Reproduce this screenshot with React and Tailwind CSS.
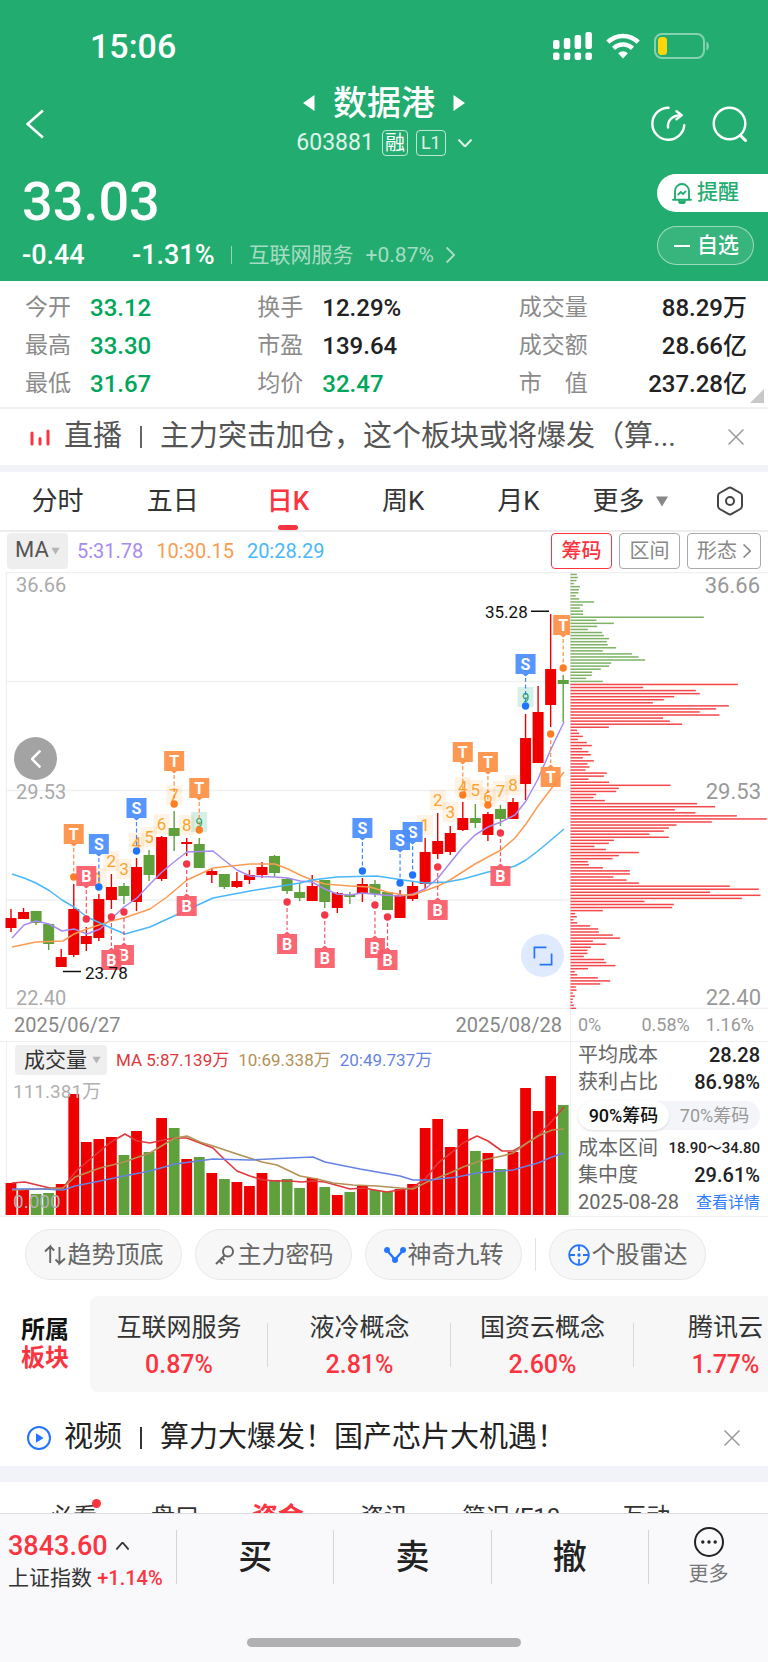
const RED = "#ee0000";
const GREEN = "#5f9f3c";

// [up, high, top, bottom, low, volume top]
const candles = [
  [1, 337, 346, 356, 360, 108],
  [1, 336, 340, 347, 347, 115],
  [0, 339, 339, 351, 353, 119],
  [0, 352, 352, 372, 378, 118],
  [1, 377, 385, 395, 395, 109],
  [1, 312, 337, 383, 385, 19],
  [1, 355, 364, 372, 379, 67],
  [1, 322, 327, 366, 369, 64],
  [1, 302, 315, 328, 337, 62],
  [0, 311, 314, 324, 332, 80],
  [1, 286, 295, 330, 339, 56],
  [0, 278, 283, 303, 309, 77],
  [1, 264, 265, 307, 309, 43],
  [0, 239, 256, 264, 279, 53],
  [1, 266, 270, 272, 284, 84],
  [0, 266, 272, 296, 296, 82],
  [1, 297, 299, 303, 311, 98],
  [0, 302, 302, 315, 317, 104],
  [1, 300, 309, 315, 316, 107],
  [1, 298, 303, 308, 312, 111],
  [1, 290, 295, 303, 306, 98],
  [0, 283, 284, 301, 305, 105],
  [0, 306, 307, 319, 322, 104],
  [0, 311, 320, 326, 329, 113],
  [1, 303, 314, 329, 329, 103],
  [0, 308, 308, 330, 336, 112],
  [1, 320, 321, 336, 341, 120],
  [0, 320, 323, 325, 332, 117],
  [1, 306, 312, 322, 330, 111],
  [0, 308, 312, 322, 325, 115],
  [0, 320, 320, 338, 338, 117],
  [1, 318, 323, 346, 346, 114],
  [1, 310, 314, 327, 329, 109],
  [1, 266, 280, 312, 317, 53],
  [1, 241, 269, 282, 287, 44],
  [1, 254, 261, 280, 283, 72],
  [1, 230, 246, 258, 259, 54],
  [0, 232, 246, 251, 256, 76],
  [1, 240, 242, 263, 269, 78],
  [0, 233, 237, 247, 254, 94],
  [1, 226, 230, 247, 247, 77],
  [1, 142, 166, 212, 228, 13],
  [1, 114, 140, 191, 191, 36],
  [1, 42, 97, 133, 155, 1],
  [0, 103, 108, 112, 150, 30],
];

const priceLines = [
  { color: "#a78bf0", points: "12,366 24,353 36,349 49,352 62,359 74,357 87,362 100,357 111,347 124,335 137,326 150,312 162,300 174,290 187,280 213,279 224,288 237,298 250,304 275,305 288,306 300,309 312,310 325,317 337,322 350,323 362,321 383,323 400,324 413,322 425,317 438,306 450,291 463,275 475,263 488,255 501,250 515,243 526,229 538,207 551,177 564,150" },
  { color: "#fb9c54", points: "12,375 36,370 63,369 74,362 87,357 111,349 124,346 150,337 167,325 187,308 213,296 250,292 275,292 288,297 300,303 312,308 325,312 350,314 370,315 387,320 403,323 413,323 438,314 450,308 475,292 501,278 515,266 526,252 538,234 551,217 564,200" },
  { color: "#48b8fb", points: "12,302 24,306 36,311 50,319 62,328 74,335 87,345 111,356 125,362 150,355 187,338 213,326 250,319 275,315 300,311 312,308 337,305 377,304 403,308 425,311 447,310 463,307 488,300 501,298 515,294 526,288 538,279 551,268 564,257" },
];

const volumeLines = [
  { color: "#e0383c", points: "12,108 25,107 37,110 50,113 63,113 76,96 88,86 111,67 125,59 137,66 150,68 163,65 175,63 187,63 200,68 213,73 225,85 237,96 250,101 263,105 277,106 290,106 302,107 313,106 325,107 350,114 363,113 387,117 399,115 412,113 425,104 438,88 451,78 463,68 477,61 488,66 502,76 513,76 527,68 538,61 552,46 564,32" },
  { color: "#b39157", points: "12,115 63,113 75,102 100,93 124,87 150,78 163,70 175,63 187,61 200,67 213,71 237,79 262,87 277,90 300,101 317,104 333,108 353,110 377,111 400,113 413,114 427,107 450,98 463,92 483,85 502,81 513,78 527,68 538,61 552,55 564,54" },
  { color: "#6683e4", points: "12,114 42,114 63,115 75,111 100,106 124,101 150,96 175,89 213,84 250,85 290,83 313,82 325,87 360,94 400,101 413,105 430,105 457,102 477,98 513,95 527,91 538,88 552,82 564,78" },
];

// [label, candle index, tag top, dot y]
const signals = [
  ["T", 5, 252, 305],
  ["B", 6, 294, 347],
  ["S", 7, 262, 315],
  ["B", 9, 373, 340],
  ["B", 8, 378, 345],
  ["S", 10, 226, 279],
  ["T", 13, 179, 232],
  ["B", 14, 324, 292],
  ["T", 15, 206, 258],
  ["B", 22, 362, 330],
  ["B", 25, 376, 343],
  ["S", 28, 246, 299],
  ["B", 29, 366, 333],
  ["B", 30, 378, 345],
  ["S", 32, 250, 303],
  ["S", 31, 258, 311],
  ["B", 34, 328, 295],
  ["T", 36, 170, 223],
  ["T", 38, 180, 233],
  ["B", 39, 294, 261],
  ["S", 41, 82, 134],
  ["T", 43, 195, 162],
  ["T", 44, 43, 96],
];

const signalColors = {
  T: { tag: "#fd9046", dot: "#fd7d22" },
  S: { tag: "#4a8dff", dot: "#1f74ff" },
  B: { tag: "#fb5a68", dot: "#f33648" },
};

// [count, candle index, center y]
const counts = [
  ["1", 7, 306], ["2", 8, 289], ["3", 9, 297], ["4", 10, 271], ["5", 11, 265],
  ["6", 12, 252], ["7", 13, 223], ["8", 14, 253], ["9", 15, 250],
  ["1", 33, 253], ["2", 34, 228], ["3", 35, 240], ["4", 36, 215], ["5", 37, 218],
  ["6", 38, 225], ["7", 39, 219], ["8", 40, 213], ["9", 41, 125],
];

const chips = [
  19, 22, 18, 10, 28, 25, 24, 16, 26, 71, 37, 28, 38, 38, 400, 78, 130, 80, 52, 95,
  100, 116, 109, 112, 137, 97, 185, 204, 224, 122, 116, 91, 65, 64, 47, 97, 502, 218, 376, 388,
  311, 280, 247, 475, 437, 388, 447, 278, 298, 335, 115, 20, 26, 37, 22, 49, 64, 35, 54, 61,
  37, 70, 51, 57, 45, 109, 100, 54, 116, 300, 145, 137, 77, 69, 103, 380, 434, 313, 375, 499,
  589, 424, 318, 295, 280, 237, 295, 130, 115, 72, 106, 205, 145, 126, 52, 55, 97, 178, 178, 129,
  168, 205, 478, 565, 419, 570, 514, 222, 310, 305, 97, 14, 19, 9, 20, 59, 83, 85, 127, 149,
  67, 106, 61, 51, 51, 40, 101, 107, 135, 52, 13, 20, 82, 119, 89, 16, 18, 7, 13, 7,
  6, 10, 17,
];
const PROFIT_CHIPS = 36;

const stats = [
  ["今开", "33.12", "text-[#00a65a]"],
  ["换手", "12.29%", "text-[#222]"],
  ["成交量", "88.29万", "text-[#222]"],
  ["最高", "33.30", "text-[#00a65a]"],
  ["市盈", "139.64", "text-[#222]"],
  ["成交额", "28.66亿", "text-[#222]"],
  ["最低", "31.67", "text-[#00a65a]"],
  ["均价", "32.47", "text-[#00a65a]"],
  ["市值", "237.28亿", "text-[#222]"],
];

const sectors = [
  ["互联网服务", "0.87%"],
  ["液冷概念", "2.81%"],
  ["国资云概念", "2.60%"],
  ["腾讯云", "1.77%"],
];

const xAt = (i) => 11 + i * 12.55;

function Chevron({ d, className, width = 2 }) {
  return (
    <svg className={className} viewBox="0 0 16 16" fill="none" stroke="currentColor" strokeWidth={width} preserveAspectRatio="none" aria-hidden="true">
      <path d={d} vectorEffect="non-scaling-stroke" />
    </svg>
  );
}

function Caret({ className }) {
  return (
    <svg className={className} viewBox="0 0 12 10" fill="currentColor" aria-hidden="true">
      <path d="M0.5 0.5h11L6 9.5z" />
    </svg>
  );
}

function Close() {
  return (
    <button aria-label="关闭" className="ml-auto p-1 text-[#999]">
      <Chevron className="h-4 w-4" width={1.5} d="M0.5 0.5l15 15M15.5 0.5l-15 15" />
    </button>
  );
}

function StatusBar() {
  return (
    <div className="flex h-[84px] items-center justify-between pt-2 pr-[58px] pl-[90px]">
      <span className="text-[34px] leading-10 font-medium">15:06</span>
      <div className="flex items-center gap-[14px]">
        <svg className="h-7 w-[39px]" viewBox="0 0 39 28" fill="#fff" aria-hidden="true">
          <rect x="0" y="8" width="6.5" height="9" rx="2" />
          <rect x="10.8" y="6" width="6.5" height="11" rx="2" />
          <rect x="21.6" y="3" width="6.5" height="14" rx="2" />
          <rect x="32.4" y="0" width="6.5" height="17" rx="2" />
          <rect x="0" y="20.5" width="6.5" height="7.5" rx="2" />
          <rect x="10.8" y="20.5" width="6.5" height="7.5" rx="2" />
          <rect x="21.6" y="20.5" width="6.5" height="7.5" rx="2" />
          <rect x="32.4" y="20.5" width="6.5" height="7.5" rx="2" />
        </svg>
        <svg className="h-[26px] w-[34px]" viewBox="0 0 34 26" fill="none" stroke="#fff" strokeWidth="4.6" aria-hidden="true">
          <path d="M1.8 9.2a21.6 21.6 0 0 1 30.4 0" />
          <path d="M7.6 15.4a13.4 13.4 0 0 1 18.8 0" />
          <path d="M17 25.4l-4.9-5.2a7 7 0 0 1 9.8 0z" fill="#fff" stroke="none" />
        </svg>
        <svg className="h-[26px] w-14" viewBox="0 0 56 26" aria-hidden="true">
          <rect x="1" y="1" width="49" height="24" rx="7" fill="none" stroke="#fff" strokeOpacity="0.45" strokeWidth="2" />
          <rect x="4" y="4" width="9" height="18" rx="3.5" fill="#ffd60a" />
          <path d="M52.5 8.5c3 1 3 8 0 9z" fill="#fff" fillOpacity="0.5" />
        </svg>
      </div>
    </div>
  );
}

function NavBar() {
  return (
    <div className="flex h-20 items-center justify-between">
      <div className="w-[120px] pl-[26px]">
        <button aria-label="返回" className="block">
          <Chevron className="h-[30px] w-[18px]" width={2.5} d="M15 0.8L1.5 8L15 15.2" />
        </button>
      </div>
      <div className="flex h-full flex-col items-center gap-2">
        <div className="flex items-center gap-[18px]">
          <svg className="h-4 w-3" viewBox="0 0 12 16" fill="#fff" aria-hidden="true"><path d="M11.5 0v16L0 8z" /></svg>
          <h1 className="text-[34px] leading-[38px] font-medium">数据港</h1>
          <svg className="h-4 w-3" viewBox="0 0 12 16" fill="#fff" aria-hidden="true"><path d="M0.5 0v16L12 8z" /></svg>
        </div>
        <div className="flex items-center gap-2 leading-[26px] text-white/85">
          <span className="text-[23px] leading-[26px]">603881</span>
          <span className="h-[26px] rounded border border-white/70 px-[2px] text-xl leading-6 text-white">融</span>
          <span className="h-[26px] rounded border border-white/70 px-1 text-lg leading-6">L1</span>
          <Chevron className="ml-1 h-2 w-[14px]" d="M0.5 1L8 15L15.5 1" />
        </div>
      </div>
      <div className="flex w-[120px] justify-end gap-[26px] pr-[20px]">
        <button aria-label="分享">
          <svg className="h-9 w-9" viewBox="0 0 36 36" fill="none" stroke="#fff" strokeWidth="2.4" strokeLinecap="round" strokeLinejoin="round" aria-hidden="true">
            <path d="M18.5 1.8a16 16 0 1 0 15.8 17.4" />
            <path d="M18 21.5c-0.6-7 4-12 13-12.2" />
            <path d="M26.5 5.2l5.3 3.9-5.3 4.2" />
          </svg>
        </button>
        <button aria-label="搜索">
          <svg className="h-9 w-9" viewBox="0 0 36 36" fill="none" stroke="#fff" strokeWidth="2.4" strokeLinecap="round" aria-hidden="true">
            <circle cx="17.5" cy="17.5" r="15.8" />
            <path d="M28.5 29.5l5 5" strokeWidth="3" />
          </svg>
        </button>
      </div>
    </div>
  );
}

function Quote() {
  return (
    <div className="flex justify-between pb-[11px]">
      <div className="pl-[22px]">
        <div className="text-[54px] leading-[76px] font-medium">33.03</div>
        <div className="flex items-center text-[27px] leading-[30px] font-medium">
          <span className="w-[110px]">-0.44</span>
          <span>-1.31%</span>
          <a href="#sector" className="ml-4 flex items-center gap-[12px] border-l border-white/50 pl-[17px] text-[21px] leading-[18px] font-normal text-white/60">
            <span>互联网服务</span>
            <span>+0.87%</span>
            <Chevron className="h-4 w-[9px]" d="M1 0.5L14.5 8L1 15.5" />
          </a>
        </div>
      </div>
      <div className="flex flex-col gap-[14px] pt-[10px]">
        <button className="flex h-[38px] w-[111px] items-center gap-[5px] rounded-l-full bg-white pl-[15px] text-[21px] font-medium text-[#22ac6f]">
          <svg className="h-[21px] w-5" viewBox="0 0 20 21" fill="none" stroke="currentColor" strokeWidth="1.9" strokeLinecap="round" strokeLinejoin="round" aria-hidden="true">
            <path d="M1 16.8h18M3 16.5V8a7 7 0 0 1 14 0v8.5" />
            <path d="M7 17.5a3 3 0 0 0 6 0" fill="currentColor" />
            <path d="M6.2 11.6l2.6-2.6 2.2 2.2 2.6-2.8" />
          </svg>
          提醒
        </button>
        <button className="flex h-[39px] w-[97px] items-center gap-[7px] rounded-full border border-white/50 bg-white/10 pl-4 text-[21px] font-medium">
          <span className="h-[2px] w-4 bg-white"></span>
          自选
        </button>
      </div>
    </div>
  );
}

function Stats() {
  return (
    <div className="relative border-b-2 border-[#f2f2f4] bg-white pt-1 pr-[21px] pb-1 pl-[25px]">
      <dl className="grid grid-cols-[232fr_261fr_228fr] pt-1 leading-[38px]">
        {stats.map(([label, value, color], i) => (
          <div key={label} className="flex items-center">
            <dt className={`flex justify-between text-[23px] text-[#8b8b8b] ${i % 3 === 2 ? "w-[69px]" : "w-[65px]"}`}>
              {label === "市值" ? <><span>市</span><span>值</span></> : label}
            </dt>
            <dd className={`text-2xl leading-[38px] font-medium ${color} ${i % 3 === 2 ? "ml-auto" : ""}`}>{value}</dd>
          </div>
        ))}
      </dl>
      <svg className="absolute right-1 bottom-1 h-[14px] w-[14px]" viewBox="0 0 14 14" fill="#c8c8c8" aria-hidden="true"><path d="M14 0v14H0z" /></svg>
    </div>
  );
}

function PeriodTabs() {
  const periods = ["分时", "五日", "日K", "周K", "月K"];
  return (
    <div className="grid grid-cols-[repeat(6,15fr)_10fr] border-b-2 border-[#ececee] bg-white text-[26px] leading-[58px] text-[#333]">
      {periods.map((p) =>
        p === "日K" ? (
          <button key={p} className="flex flex-col items-center text-[#fb3440]">
            <span className="h-[53px] font-medium">{p}</span>
            <span className="h-[5px] w-5 rounded-full bg-[#fb3440]"></span>
          </button>
        ) : (
          <button key={p}>{p}</button>
        )
      )}
      <button className="flex items-center justify-center gap-[10px] pr-[6px]">
        更多
        <Caret className="h-[11px] w-[14px] text-[#888]" />
      </button>
      <button aria-label="设置" className="flex items-center justify-center">
        <svg className="h-[30px] w-[28px]" viewBox="0 0 28 30" fill="none" stroke="#444" strokeWidth="2" strokeLinejoin="round" aria-hidden="true">
          <path d="M12.3 2.1a3.4 3.4 0 0 1 3.4 0l8.6 4.9a3.4 3.4 0 0 1 1.7 3v10a3.4 3.4 0 0 1-1.7 3l-8.6 4.9a3.4 3.4 0 0 1-3.4 0L3.7 23A3.4 3.4 0 0 1 2 20V10a3.4 3.4 0 0 1 1.7-3z" />
          <circle cx="14" cy="15" r="4" />
        </svg>
      </button>
    </div>
  );
}

function Signal({ label, index, top, dot }) {
  const x = xAt(index);
  const { tag, dot: dotColor } = signalColors[label];
  const above = top < dot;
  return (
    <g>
      <line x1={x} x2={x} y1={above ? top + 24 : dot + 6} y2={above ? dot - 5 : top - 4} stroke={dotColor} strokeOpacity="0.85" strokeWidth="1.2" strokeDasharray="4 2.5" />
      <circle cx={x} cy={dot} r="3.7" fill={dotColor} />
      <rect x={x - 10} y={top} width="20" height="20" fill={tag} fillOpacity="0.93" />
      {above ? (
        <path d={`M${x - 3} ${top + 20}h6l-3 2.5z`} fill={tag} />
      ) : (
        <path d={`M${x - 3} ${top}h6l-3 -2.5z`} fill={tag} />
      )}
      <text x={x} y={top + 16} textAnchor="middle" fontSize="16" fontWeight="700" fill="#fff">{label}</text>
    </g>
  );
}

function PriceChart() {
  return (
    <div className="relative">
      <svg className="block w-full" viewBox="0 0 570 437" role="img" aria-label="日K线图">
        <g stroke="#f0f0f1" strokeWidth="1.3">
          <path d="M6 0.7H570M6 109.5H570M6 218.5H570M6 328H570M6 436.5H570M6.3 0V437" />
        </g>
        <g fontSize="20" fill="#aaa">
          <text x="16" y="20">36.66</text>
          <text x="16" y="227">29.53</text>
          <text x="16" y="433">22.40</text>
        </g>
        {candles.map(([up, high, top, bottom, low], i) => (
          <g key={i} fill={up ? RED : GREEN}>
            <rect x={xAt(i) - 5.5} y={top} width="11" height={bottom - top} />
            <rect x={xAt(i) - 0.7} y={high} width="1.4" height={low - high} />
          </g>
        ))}
        {priceLines.map((line) => (
          <polyline key={line.color} points={line.points} fill="none" stroke={line.color} strokeWidth="1.5" strokeLinejoin="round" />
        ))}
        {counts.map(([n, i, y]) => (
          <g key={i}>
            <rect x={xAt(i) - 8} y={y - 10} width="16" height="20" fill={n === "9" ? "#12a562" : "#fb9c34"} fillOpacity={n === "9" ? 0.17 : 0.12} />
            <text x={xAt(i)} y={n === "9" ? y + 5 : y + 6} textAnchor="middle" fontSize={n === "9" ? 13 : 17} fill={n === "9" ? "#12a562" : "#fba52c"}>{n}</text>
          </g>
        ))}
        {signals.map(([label, index, top, dot]) => (
          <Signal key={index} label={label} index={index} top={top} dot={dot} />
        ))}
        <g fontSize="17" fill="#111">
          <text x="85" y="407">23.78</text>
          <text x="485" y="46">35.28</text>
        </g>
        <path d="M63 399.5H81M531 39.3H549" stroke="#111" strokeWidth="1.6" />
      </svg>
      <button aria-label="向前" className="absolute top-[165px] left-[14px] flex h-[43px] w-[43px] items-center justify-center rounded-full bg-[#a3a3a3] text-white">
        <Chevron className="h-[18px] w-[10px]" width={2.5} d="M15 0.5L1.5 8L15 15.5" />
      </button>
      <button aria-label="全屏" className="absolute right-[6px] bottom-[32px] flex h-[43px] w-[43px] items-center justify-center rounded-full bg-[#e0eaff]">
        <svg className="h-5 w-5" viewBox="0 0 20 20" fill="none" stroke="#2574ff" strokeWidth="1.7" aria-hidden="true">
          <path d="M1.4 12.5V1.4h12M18.6 7.5v11.1h-12" />
        </svg>
      </button>
    </div>
  );
}

function ChipChart() {
  return (
    <svg className="block w-full" viewBox="0 0 198 437" role="img" aria-label="筹码分布">
      <path d="M0 0.7H198M0 436.5H198M0.5 0V437" stroke="#f0f0f1" strokeWidth="1.3" />
      {chips.map((w, i) => (
        <rect key={i} x="0.5" y={1.7 + i * 3.056} width={w / 3} height="1.5" fill={i < PROFIT_CHIPS ? "#7fb265" : "#f4474a"} />
      ))}
      <g fontSize="22" fill="#999" textAnchor="end">
        <text x="190" y="21">36.66</text>
        <text x="191" y="227">29.53</text>
        <text x="191" y="433">22.40</text>
      </g>
    </svg>
  );
}

function VolumeLegend() {
  return (
    <div className="flex items-center gap-[9px] border-l border-[#f0f0f1] pt-[3px] pl-2 text-[17px] leading-[30px] whitespace-nowrap">
      <button className="flex h-[30px] w-[92px] items-center gap-[5px] rounded bg-[#efefef] pl-[9px] text-[21px] text-[#333]">
        成交量
        <Caret className="h-2 w-[9px] text-[#b5b5b5]" />
      </button>
      <span className="text-[#e0383c]">MA 5:87.139万</span>
      <span className="text-[#b39157]">10:69.338万</span>
      <span className="text-[#6683e4]">20:49.737万</span>
    </div>
  );
}

function VolumeBars() {
  return (
    <svg className="block w-full" viewBox="0 0 570 140" role="img" aria-label="成交量图">
      <path d="M6.3 0V140" stroke="#f0f0f1" strokeWidth="1.3" />
      {candles.map(([up, , , , , top], i) => (
        <rect key={i} x={xAt(i) - 5.4} y={top} width="10.8" height={140 - top} fill={up ? RED : GREEN} />
      ))}
      {volumeLines.map((line) => (
        <polyline key={line.color} points={line.points} fill="none" stroke={line.color} strokeWidth="1.6" strokeLinejoin="round" />
      ))}
      <g fontSize="19" fill="#b0b0b0">
        <text x="13" y="23">111.381万</text>
        <text x="13" y="133">0.000</text>
      </g>
    </svg>
  );
}

function ChipInfo() {
  return (
    <div className="flex flex-col border-l border-[#f0f0f1] pr-2 pl-[7px] text-xl leading-[27px] text-[#666]">
      <div className="flex justify-between">平均成本<span className="font-medium text-[#222]">28.28</span></div>
      <div className="flex justify-between">获利占比<span className="font-medium text-[#222]">86.98%</span></div>
      <div className="my-[5px] flex h-[29px] rounded-full bg-[#f3f5f9] text-lg leading-[29px]">
        <button className="flex-1 rounded-full bg-white font-medium whitespace-nowrap text-[#111] shadow">90%筹码</button>
        <button className="flex-1 whitespace-nowrap text-[#999]">70%筹码</button>
      </div>
      <div className="flex justify-between whitespace-nowrap">成本区间<span className="text-[15px] leading-[27px] font-medium text-[#222]">18.90～34.80</span></div>
      <div className="flex justify-between">集中度<span className="font-medium text-[#222]">29.61%</span></div>
      <div className="flex justify-between whitespace-nowrap">2025-08-28<a href="#detail" className="text-base leading-[27px] text-[#2f7cff]">查看详情</a></div>
    </div>
  );
}

function Chart() {
  return (
    <div className="bg-white">
      <div className="flex h-10 items-center gap-[13px] pr-[7px] pb-[3px] pl-[7px] text-xl">
        <button className="-mr-1 flex h-9 w-[61px] items-center justify-center gap-[2px] rounded bg-[#eee] text-[22px] text-[#555]">
          MA
          <Caret className="h-2 w-[9px] text-[#b5b5b5]" />
        </button>
        <span className="text-[#a78bf0]">5:31.78</span>
        <span className="text-[#fb9c54]">10:30.15</span>
        <span className="text-[#48b8fb]">20:28.29</span>
        <div className="ml-auto flex gap-[7px] text-[#888]">
          <button className="h-9 w-[61px] rounded border border-[#fb3440] font-medium text-[#fb3440]">筹码</button>
          <button className="h-9 w-[61px] rounded border border-[#aaa]">区间</button>
          <button className="flex h-9 w-[74px] items-center justify-center gap-[6px] rounded border border-[#aaa]">
            形态
            <Chevron className="h-[14px] w-2" width={1.6} d="M1 0.5L14.5 8L1 15.5" />
          </button>
        </div>
      </div>
      <div className="grid grid-cols-[570fr_198fr]">
        <PriceChart />
        <ChipChart />
        <div className="flex items-center justify-between border-b border-[#f0f0f1] pr-2 pl-[14px] text-xl leading-8 text-[#888]">
          <span>2025/06/27</span>
          <span>2025/08/28</span>
        </div>
        <div className="flex items-center border-b border-l border-[#f0f0f1] pr-[14px] pl-[7px] text-lg leading-8 text-[#999]">
          <span className="mr-auto">0%</span>
          <span className="mr-4">0.58%</span>
          <span>1.16%</span>
        </div>
        <div>
          <div className="pl-[6px]">
            <VolumeLegend />
          </div>
          <VolumeBars />
        </div>
        <ChipInfo />
      </div>
    </div>
  );
}

function ToolButton({ icon, label }) {
  return (
    <button className="flex h-[51px] w-[157px] items-center justify-center gap-[2px] rounded-full border border-[#e9e9e9] bg-[#f7f7f7] text-2xl whitespace-nowrap text-[#666]">
      {icon}
      {label}
    </button>
  );
}

function Tools() {
  return (
    <div className="flex gap-[13px] border-t border-[#f0f0f1] bg-white px-[25px] pt-3 pb-4">
      <ToolButton
        label="趋势顶底"
        icon={
          <svg className="h-[22px] w-[22px]" viewBox="0 0 22 22" fill="none" stroke="currentColor" strokeWidth="1.9" aria-hidden="true">
            <path d="M1 7.5L6.2 2.5V19M6.2 2.5l4 4M21 14.5L15.5 19.5V3M15.5 19.5l-4-4" />
          </svg>
        }
      />
      <ToolButton
        label="主力密码"
        icon={
          <svg className="h-[22px] w-[22px]" viewBox="0 0 22 22" fill="none" stroke="currentColor" strokeWidth="2" aria-hidden="true">
            <circle cx="14" cy="7.5" r="5" />
            <path d="M10.5 11.5L2 20M5.2 16.5l3.4 3.4M8 13.8l2.6 2.6" />
          </svg>
        }
      />
      <ToolButton
        label="神奇九转"
        icon={
          <svg className="h-[22px] w-[22px]" viewBox="0 0 22 22" fill="#2574ff" stroke="#2574ff" strokeWidth="2.4" aria-hidden="true">
            <path d="M3 6.5L11 15.5L19 6.5" fill="none" />
            <circle cx="3" cy="6" r="1.8" />
            <circle cx="11" cy="16" r="1.8" />
            <circle cx="19" cy="6" r="1.8" />
          </svg>
        }
      />
      <span className="my-[9px] w-px bg-[#e2e2e2]"></span>
      <ToolButton
        label="个股雷达"
        icon={
          <svg className="h-[22px] w-[22px]" viewBox="0 0 22 22" fill="none" stroke="#2574ff" strokeWidth="1.8" aria-hidden="true">
            <circle cx="11" cy="11" r="9.8" />
            <circle cx="11" cy="11" r="1.7" fill="#2574ff" stroke="none" />
            <path d="M11 1v6M11 15v6M1 11h6M15 11h6" />
          </svg>
        }
      />
    </div>
  );
}

function Sectors() {
  return (
    <div id="sector" className="flex items-center bg-white">
      <h2 className="w-[90px] shrink-0 pl-[21px] text-2xl leading-7 font-bold text-[#111]">
        所属
        <span className="block text-[#fb3440]">板块</span>
      </h2>
      <div className="flex h-24 flex-1 items-center overflow-hidden rounded-l-lg bg-[#f7f7f7] pt-[3px]">
        {sectors.map(([name, change], i) => (
          <div key={name} className="relative w-[183px] shrink-0 text-center text-[25px] leading-[37px] first:w-[178px]">
            <div className="text-[#333]">{name}</div>
            <div className="font-medium text-[#fb3440]">{change}</div>
            {i < 3 && <span className="absolute top-[14px] right-0 h-11 w-px bg-[#d8d8d8]"></span>}
          </div>
        ))}
      </div>
    </div>
  );
}

function DetailTabs() {
  return (
    <div className="flex h-8 items-start overflow-hidden bg-white pt-[17px] text-2xl leading-9 text-[#333]">
      <button className="relative ml-[49px]">
        必看
        <span className="absolute -right-1 top-0 h-[9px] w-[9px] rounded-full bg-[#fb3440]"></span>
      </button>
      <button className="ml-[54px]">盘口</button>
      <button className="ml-[53px] text-[26px] leading-9 font-bold text-[#fb3440]">资金</button>
      <button className="ml-[56px]">资讯</button>
      <button className="ml-[54px]">简况/F10</button>
      <button className="ml-[62px]">互动</button>
    </div>
  );
}

function TradeBar() {
  return (
    <footer className="fixed inset-x-0 bottom-0 border-t border-[#dcdce0] bg-[#f9f9fc]">
      <div className="flex items-start pt-4">
        <div className="w-[176px] pl-2 whitespace-nowrap">
          <div className="flex items-center gap-2 text-[27px] leading-8 font-medium text-[#fb3440]">
            3843.60
            <Chevron className="h-2 w-[13px] text-[#333]" width={1.8} d="M0.5 15L8 1L15.5 15" />
          </div>
          <div className="text-[21px] leading-8 text-[#333]">
            上证指数 <span className="text-xl leading-8 font-medium text-[#fb3440]">+1.14%</span>
          </div>
        </div>
        <div className="flex flex-1 divide-x divide-[#d5d5d8] border-x border-[#d5d5d8] text-[34px] leading-[54px] font-medium text-[#222]">
          <button className="flex-1">买</button>
          <button className="flex-1">卖</button>
          <button className="flex-1">撤</button>
        </div>
        <button className="-mt-1 flex w-[119px] flex-col items-center text-xl leading-8 text-[#777]">
          <svg className="h-8 w-8" viewBox="0 0 32 32" fill="none" stroke="#222" strokeWidth="2" aria-hidden="true">
            <circle cx="16" cy="16" r="14" />
            <g fill="#222" stroke="none">
              <circle cx="9.8" cy="16" r="1.7" />
              <circle cx="16" cy="16" r="1.7" />
              <circle cx="22.2" cy="16" r="1.7" />
            </g>
          </svg>
          更多
        </button>
      </div>
      <div className="mx-auto mt-[44px] mb-[15px] h-[9px] w-[274px] rounded-full bg-[#b0b0b3]"></div>
    </footer>
  );
}

export default function App() {
  return (
    <div className="bg-[#f2f3f8] font-[family-name:Roboto,'Noto_Sans_CJK_SC',sans-serif]">
      <header className="bg-[#22ac6f] text-white">
        <StatusBar />
        <NavBar />
        <Quote />
      </header>
      <Stats />

      {/* Live news */}
      <div className="mb-[7px] flex h-14 items-center bg-white pr-[20px] pl-[30px] text-[29px] text-[#555]">
        <svg className="mr-[14px] h-[17px] w-5" viewBox="0 0 20 17" fill="none" stroke="#fb3440" strokeWidth="3" strokeLinecap="round" aria-hidden="true">
          <path d="M2 4v11M10 9.5V15M18 2v13" />
        </svg>
        <span>直播</span>
        <span className="mx-[18px] h-[22px] w-[2px] bg-[#666]"></span>
        <span className="whitespace-nowrap">主力突击加仓，这个板块或将爆发（算...</span>
        <Close />
      </div>

      <PeriodTabs />
      <Chart />
      <Tools />
      <Sectors />

      {/* Video */}
      <div className="mb-4 flex h-[74px] items-center bg-white pt-[18px] pr-6 pl-[27px] text-[29px] text-[#222]">
        <svg className="mr-[13px] h-6 w-6" viewBox="0 0 24 24" fill="none" stroke="#2574ff" strokeWidth="2" aria-hidden="true">
          <circle cx="12" cy="12" r="11" />
          <path d="M9 7.2v9.6l7.6-4.8z" fill="#2574ff" stroke="none" />
        </svg>
        <span>视频</span>
        <span className="mx-[18px] h-[22px] w-[2px] bg-[#333]"></span>
        <span className="whitespace-nowrap">算力大爆发！国产芯片大机遇！</span>
        <Close />
      </div>

      <DetailTabs />
      <TradeBar />
    </div>
  );
}
